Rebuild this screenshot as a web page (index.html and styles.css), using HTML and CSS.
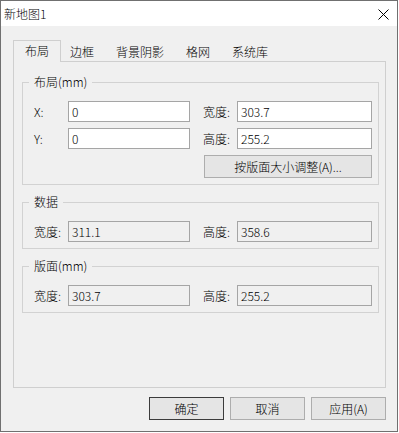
FILE: index.html
```html
<!DOCTYPE html>
<html lang="zh-CN">
<head>
    <meta charset="UTF-8">
    <meta name="viewport" content="width=device-width, initial-scale=1.0">
    <title>新地图1</title>
    <link rel="stylesheet" href="styles.css">
</head>
<body>
<div class="window">
    <div class="titlebar">
        <span class="title">新地图1</span>
        <span class="close">
            <svg width="11" height="11" viewBox="0 0 11 11">
                <path d="M0.5 0.5 L10.5 10.5 M10.5 0.5 L0.5 10.5" stroke="#000" stroke-width="1" fill="none"/>
            </svg>
        </span>
    </div>
    <div class="client">
        <div class="tabs">
            <div class="tab active">布局</div>
            <div class="tab">边框</div>
            <div class="tab">背景阴影</div>
            <div class="tab">格网</div>
            <div class="tab">系统库</div>
        </div>
        <div class="panel">
            <fieldset class="group">
                <legend>布局(mm)</legend>
                <div class="row">
                    <div class="field left"><label>X:</label><input class="edit" type="text" value="0"></div>
                    <div class="field right"><label>宽度:</label><input class="edit" type="text" value="303.7"></div>
                </div>
                <div class="row">
                    <div class="field left"><label>Y:</label><input class="edit" type="text" value="0"></div>
                    <div class="field right"><label>高度:</label><input class="edit" type="text" value="255.2"></div>
                </div>
                <div class="actions">
                    <button class="btn fit">按版面大小调整(A)...</button>
                </div>
            </fieldset>
            <fieldset class="group">
                <legend>数据</legend>
                <div class="row">
                    <div class="field left"><label>宽度:</label><input class="edit" type="text" value="311.1" readonly></div>
                    <div class="field right"><label>高度:</label><input class="edit" type="text" value="358.6" readonly></div>
                </div>
            </fieldset>
            <fieldset class="group">
                <legend>版面(mm)</legend>
                <div class="row">
                    <div class="field left"><label>宽度:</label><input class="edit" type="text" value="303.7" readonly></div>
                    <div class="field right"><label>高度:</label><input class="edit" type="text" value="255.2" readonly></div>
                </div>
            </fieldset>
        </div>
        <div class="footer">
            <button class="btn default">确定</button>
            <button class="btn">取消</button>
            <button class="btn">应用(A)</button>
        </div>
    </div>
</div>
</body>
</html>
```

FILE: styles.css
```css
body {
    margin: 0;
    background-color: #ffffff;
    font-family: "Noto Sans CJK SC", "Noto Sans", sans-serif;
    font-size: 12px;
    font-weight: 300;
    color: #000000;
}
.window {
    width: 398px;
    height: 432px;
    box-sizing: border-box;
    border: 1px solid #707070;
    display: flex;
    flex-direction: column;
}
.titlebar {
    height: 25px;
    background-color: #ffffff;
    display: flex;
    align-items: center;
    justify-content: space-between;
    padding: 0 8px 0 3px;
}
.title {
    line-height: 16px;
}
.close {
    display: flex;
    margin-top: 1px;
}
.client {
    flex: 1;
    background-color: #f0f0f0;
    padding: 0 11px 0 12px;
}
.tabs {
    display: flex;
    align-items: flex-start;
    height: 21px;
    margin-top: 14px;
    padding-left: 2px;
}
.tab {
    box-sizing: border-box;
    height: 19px;
    margin-top: 2px;
    padding: 0 10px;
    line-height: 17px;
    border: 1px solid transparent;
    border-bottom: 0;
}
.tab.active {
    position: relative;
    z-index: 1;
    height: 22px;
    margin: 0 -2px;
    padding: 0 11px;
    line-height: 19px;
    border-color: #cfcfcf;
    background-color: #f0f0f0;
}
.panel {
    box-sizing: border-box;
    height: 327px;
    border: 1px solid #cfcfcf;
    padding: 12px 6px 0 8px;
}
.group {
    margin: 0;
    padding: 11px 6px 6px 11px;
    border: 1px solid #d2d2d2;
    min-inline-size: 0;
}
.group + .group {
    margin-top: 9px;
}
.group legend {
    padding: 0 5px;
    margin-left: -5px;
    line-height: 16px;
}
.row {
    display: flex;
    align-items: center;
}
.row + .row {
    margin-top: 6px;
}
.field {
    display: flex;
    align-items: center;
}
.field label {
    width: 34px;
    line-height: 16px;
}
.field.left {
    margin-right: 13px;
}
.field.left .edit {
    width: 122px;
}
.field.right .edit {
    width: 135px;
}
.edit {
    box-sizing: border-box;
    height: 21px;
    margin: 0;
    padding: 0 3px;
    border: 1px solid #a5a5a5;
    background-color: #ffffff;
    font-family: inherit;
    font-size: 12px;
    font-weight: inherit;
    color: #000000;
    outline: none;
}
.edit[readonly] {
    background-color: #f0f0f0;
}
.actions {
    display: flex;
    justify-content: flex-end;
    margin-top: 6px;
}
.btn {
    box-sizing: border-box;
    width: 75px;
    height: 23px;
    margin: 0;
    padding: 0;
    border: 1px solid #adadad;
    background-color: #e5e5e5;
    font-family: inherit;
    font-size: 12px;
    font-weight: inherit;
    color: #000000;
}
.btn.fit {
    width: 168px;
}
.btn.default {
    border-color: #3c3c3c;
}
.footer {
    display: flex;
    justify-content: flex-end;
    gap: 6px;
    margin-top: 9px;
}
```
